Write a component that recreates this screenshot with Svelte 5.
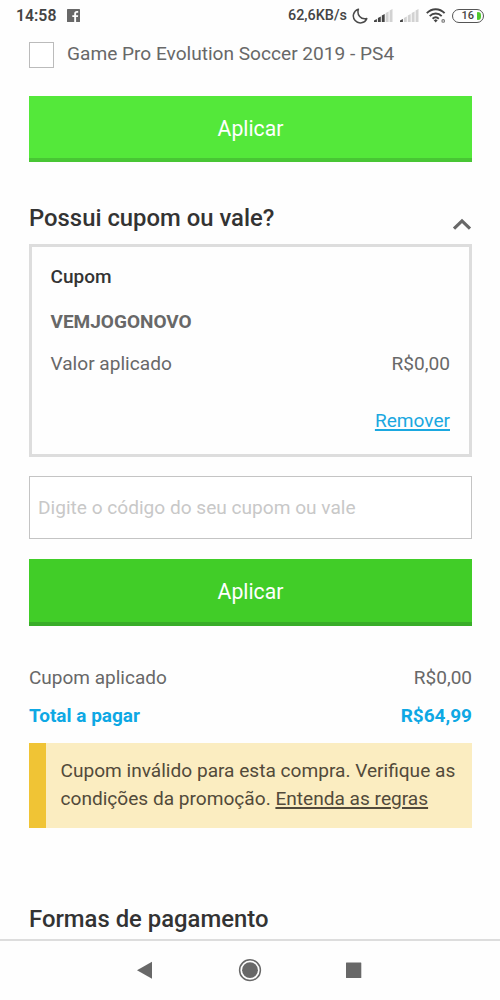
<script lang="ts">
	let selected = $state(false);
	let open = $state(true);
	let code = $state('');

	const coupon = { name: 'VEMJOGONOVO', value: 'R$0,00' };
	const total = 'R$64,99';
	const bars = [3, 5.5, 8, 10.5, 13];
	const signals = [3, 1];
</script>

<div class="screen">
	<header class="status">
		<span class="time">14:58</span>
		<svg class="fb" width="13" height="13" viewBox="0 0 13 13">
			<rect width="13" height="13" rx="0.6" fill="#686868" />
			<path d="M7.2 13V8H5.3V6.2h1.9V4.7c0-1.8 1.1-2.7 2.7-2.7h1.3v1.8h-1c-.9 0-1.1.4-1.1 1.1v1.3h2.1L10.9 8H9.1v5z" fill="#fff" />
		</svg>
		<span class="speed">62,6KB/s</span>
		<svg class="moon" width="16" height="16" viewBox="0 0 16 16">
			<path d="M6.4 1.2A7 7 0 1 0 14.8 10.6C8.8 12 4.6 7 6.4 1.2Z" fill="none" stroke="#4a4a4a" stroke-width="1.5" stroke-linejoin="round" />
		</svg>
		{#each signals as level}
			<svg class="signal" width="19" height="13" viewBox="0 0 19 13">
				{#each bars as h, i}
					<path d="M{i * 3.9} 13v{1.6 - h}l2.9 -1.6v{h}z" fill={i < level ? '#444' : '#d2d2d2'} />
				{/each}
			</svg>
		{/each}
		<svg class="wifi" width="20" height="15" viewBox="0 0 20 15">
			<g fill="none" stroke="#444" stroke-width="1.9">
				<path d="M.8 5.2C5.8-.1 13.6-.1 18.6 5.2" />
				<path d="M3.7 8.1c3.4-3.4 8.6-3.4 12 0" />
				<path d="M6.6 10.8c1.8-1.7 4.4-1.7 6.2 0" />
			</g>
			<path d="M7.7 12.3l2-1 2 1-2 2.2z" fill="#444" />
			<circle cx="17.2" cy="12.9" r="1.3" fill="none" stroke="#777" stroke-width="1.1" />
		</svg>
		<div class="battery"><span>16</span><i></i></div>
	</header>

	<main>
		<label class="product">
			<input type="checkbox" bind:checked={selected} />
			<span>Game Pro Evolution Soccer 2019 - PS4</span>
		</label>
		<button class="apply light">Aplicar</button>

		<div class="heading">
			<h2>Possui cupom ou vale?</h2>
			<button class="toggle" aria-label="Cupom ou vale" onclick={() => (open = !open)}>
				<svg width="20" height="13" viewBox="0 0 20 13">
					<path d="M2 10.7L10 2.9l8 7.8" fill="none" stroke="#686868" stroke-width="3.2" />
				</svg>
			</button>
		</div>

		{#if open}
			<section class="coupon">
				<h3>Cupom</h3>
				<strong>{coupon.name}</strong>
				<div class="row"><span>Valor aplicado</span><span class="amount">{coupon.value}</span></div>
				<a href="#remover">Remover</a>
			</section>
			<input class="code" type="text" placeholder="Digite o código do seu cupom ou vale" bind:value={code} />
			<button class="apply">Aplicar</button>
		{/if}

		<div class="totals">
			<div class="row"><span>Cupom aplicado</span><span class="amount">{coupon.value}</span></div>
			<div class="row total"><span>Total a pagar</span><span class="amount">{total}</span></div>
		</div>

		<div class="alert">
			Cupom inválido para esta compra. Verifique as condições da promoção. <a href="#regras">Entenda as regras</a>
		</div>

		<h2 class="payment">Formas de pagamento</h2>
	</main>

	<nav>
		<svg width="500" height="59" viewBox="0 0 500 59" fill="#686868">
			<path d="M137 29.2l15-8.4v17z" />
			<circle cx="250" cy="29.2" r="7.9" />
			<circle cx="250" cy="29.2" r="10.4" fill="none" stroke="#686868" stroke-width="1.5" />
			<rect x="346" y="21.6" width="15.3" height="15.3" rx="0.5" />
		</svg>
	</nav>
</div>

<style>
	:global(body) { background: #fefefe; }
	.screen { width: 500px; height: 1000px; box-sizing: border-box; display: flex; flex-direction: column; overflow: hidden; background: #fefefe; color: #686868; font-family: Roboto, "Liberation Sans", sans-serif; font-size: 19.1px; line-height: 28px; }
	.screen :where(h2, h3) { margin: 0; font-weight: 500; color: #333; }
	button { border: 0; padding: 0; font-family: inherit; cursor: pointer; }

	.status { flex: none; height: 31px; box-sizing: border-box; display: flex; align-items: center; padding: 0 16px; color: #444; }
	.time { font-size: 15.8px; font-weight: 600; width: 51px; }
	.speed { font-size: 14.4px; font-weight: 500; margin-left: auto; width: 64px; white-space: nowrap; }
	.moon { margin-right: 6px; }
	.signal { margin-right: 7px; }
	.wifi { margin-right: 6px; }
	.battery { width: 32px; height: 14px; box-sizing: border-box; border: 1.5px solid #555; border-radius: 7px; display: flex; align-items: center; justify-content: flex-end; gap: 3px; padding-right: 2px; font-size: 11px; font-weight: 500; }
	.battery i { width: 4px; height: 8px; background: #4fc92e; border-radius: 1px 4px 4px 1px; }

	main { flex: 1; min-height: 0; display: flex; flex-direction: column; padding: 11px 28px 0 29px; }
	.product { flex: none; display: flex; align-items: center; gap: 13px; height: 26px; margin-bottom: 28px; }
	.product span { margin-top: -3px; white-space: nowrap; }
	.product input { appearance: none; width: 25px; height: 26px; margin: 0; border: 1px solid #bbb; background: #fff; }
	.product input:checked { background: #41cd28; }

	.apply { flex: none; height: 67px; padding-top: 2px; background: #41cd28; border-bottom: 4px solid #38ad28; color: #fff; font-size: 21.2px; }
	.apply.light { height: 66px; background: #54e83a; border-bottom-color: #48c634; }

	.heading { flex: none; display: flex; justify-content: space-between; height: 82px; align-items: flex-end; }
	h2 { flex: none; font-size: 23.85px; line-height: 30px; padding-bottom: 11px; }
	.toggle { display: flex; background: none; padding-bottom: 13px; }

	.coupon { flex: none; height: 213px; box-sizing: border-box; border: 3px solid #ddd; padding: 16px 19px 0 18.5px; display: flex; flex-direction: column; }
	h3 { font-size: 19px; }
	strong { margin-top: 17px; font-weight: 700; font-size: 19px; }
	.row { display: flex; justify-content: space-between; }
	.coupon .row { margin-top: 14px; }
	.coupon a { align-self: flex-end; margin-top: 29px; color: #1ba8e0; }
	a { color: inherit; text-underline-offset: 2px; text-decoration-thickness: 1.5px; }

	.code { flex: none; height: 63px; box-sizing: border-box; margin: 19px 0 20px; padding: 0 8px; border: 1.5px solid #c4c4c4; border-radius: 0; background: #fff; font-family: inherit; font-size: 19.1px; }
	.code::placeholder { color: #c8c8c8; opacity: 1; }

	.totals { flex: none; padding: 38px 0 13px; display: flex; flex-direction: column; gap: 10px; font-size: 19px; }
	.total { color: #0ea8e4; font-weight: 700; }

	.alert { flex: none; height: 85px; box-sizing: border-box; border-left: 17.5px solid #f0c435; background: #fbedc1; color: #524a3a; padding: 14px 0 0 14.5px; }
	.payment { margin-top: 76px; }

	nav { flex: none; height: 61px; box-sizing: border-box; border-top: 2px solid #ddd; background: #fefefe; }
	nav svg { display: block; }
</style>
